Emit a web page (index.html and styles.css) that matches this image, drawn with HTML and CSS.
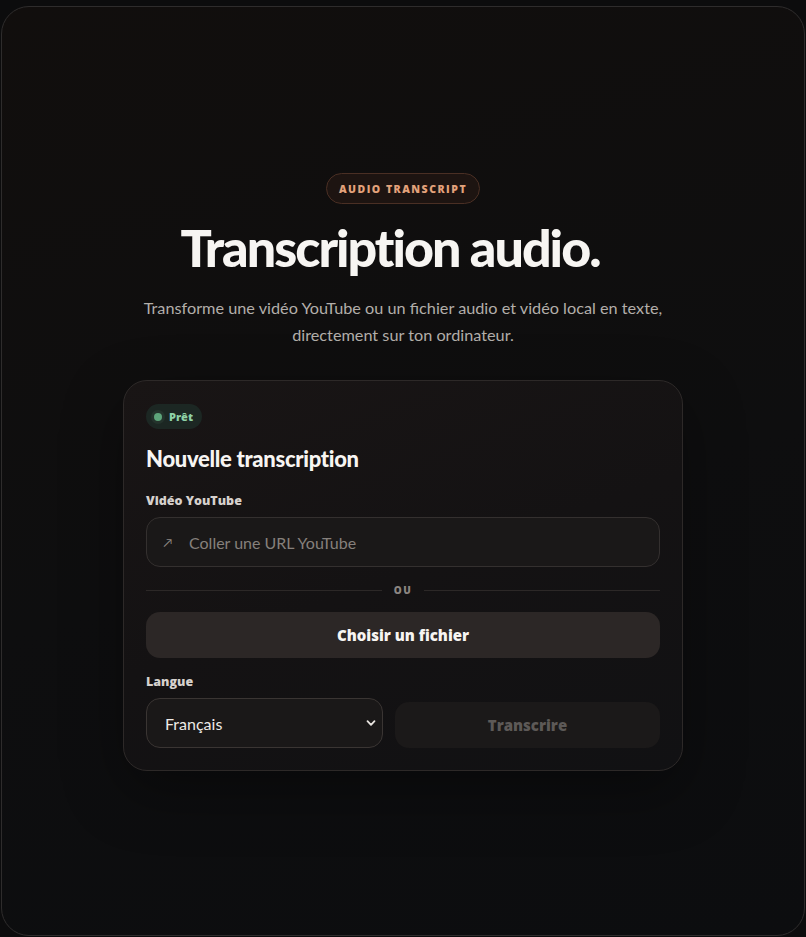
FILE: index.html
```html
<!DOCTYPE html>
<html lang="fr">
<head>
<meta charset="utf-8">
<title>Transcription audio</title>
<link rel="stylesheet" href="styles.css">
</head>
<body>
<main class="frame">
  <div class="content">
    <span class="eyebrow">AUDIO TRANSCRIPT</span>
    <h1 class="title">Transcription audio.</h1>
    <p class="lead">Transforme une vidéo YouTube ou un fichier audio et vidéo local en texte,<br>directement sur ton ordinateur.</p>

    <section class="card">
      <span class="status"><span class="dot"></span>Prêt</span>
      <h2 class="card-title">Nouvelle transcription</h2>

      <label class="label" for="url">Vidéo YouTube</label>
      <div class="input">
        <span class="input-icon">↗</span>
        <input id="url" type="text" placeholder="Coller une URL YouTube">
      </div>

      <div class="divider"><span class="line"></span><span class="or">OU</span><span class="line"></span></div>

      <button class="btn-file" type="button">Choisir un fichier</button>

      <label class="label label-lang" for="lang">Langue</label>
      <div class="row">
        <div class="select">
          <span class="select-value">Français</span>
          <svg class="chevron" viewBox="0 0 12 12" width="12" height="12"><path d="M2.5 4.2 L6 7.8 L9.5 4.2" fill="none" stroke="#e8e4e0" stroke-width="1.8" stroke-linecap="round" stroke-linejoin="round"/></svg>
        </div>
        <button class="btn-go" type="button">Transcrire</button>
      </div>
    </section>
  </div>
</main>
</body>
</html>
```
FILE: styles.css
```css
* { box-sizing: border-box; }
html, body { height: 100%; }
body {
  margin: 0;
  padding: 6px 1px 1px 1px;
  background: #0c0c0d;
  font-family: Lato, "Open Sans", sans-serif;
  color: #f4f2f0;
}
.frame {
  height: 930px;
  border: 1px solid #2e2c2c;
  border-radius: 28px;
  background: linear-gradient(165deg, #110e0d 0%, #0e0e0f 55%, #0c0d0f 100%);
  display: flex;
  align-items: center;
  justify-content: center;
}
.content {
  width: 560px;
  display: flex;
  flex-direction: column;
  align-items: center;
  margin-top: 2px;
}
.eyebrow, .status, .label, .or, .btn-file, .btn-go {
  font-family: "Open Sans", Lato, sans-serif;
  font-weight: 800;
}
.eyebrow {
  height: 31px;
  padding: 0 12px;
  display: inline-flex;
  align-items: center;
  border: 1px solid #4a2f24;
  border-radius: 999px;
  background: #1d1411;
  color: #e3a27b;
  font-size: 10.5px;
  letter-spacing: 1.5px;
}
.title {
  margin: 13px 26px 0 0;
  font-size: 52px;
  font-weight: 900;
  letter-spacing: -2px;
  line-height: 60px;
  color: #f7f5f2;
}
.lead {
  margin: 17px -60px 0;
  text-align: center;
  font-size: 16.25px;
  line-height: 27px;
  color: #b3aeaa;
  white-space: nowrap;
}
.card {
  width: 560px;
  margin-top: 32px;
  padding: 23px 22px 22px 22px;
  border: 1px solid #2d2928;
  border-radius: 24px;
  background: linear-gradient(160deg, #191515 0%, #141213 50%, #111113 100%);
  box-shadow: 0 20px 60px rgba(0,0,0,0.35);
  display: flex;
  flex-direction: column;
  align-items: stretch;
}
.status {
  align-self: flex-start;
  height: 25px;
  padding: 0 9px 0 8px;
  display: inline-flex;
  align-items: center;
  gap: 7px;
  border-radius: 999px;
  background: #1c2723;
  color: #8fd1a6;
  font-size: 11px;
}
.dot {
  width: 8px; height: 8px;
  border-radius: 50%;
  background: #5da47a;
  box-shadow: 0 0 0 3px #24332c;
}
.card-title {
  margin: 16px 0 0;
  font-size: 22px;
  font-weight: 900;
  letter-spacing: -0.3px;
  line-height: 28px;
  color: #f7f5f2;
}
.label {
  margin-top: 19px;
  font-size: 12.5px;
  color: #d6d1cd;
  line-height: 18px;
}
.input {
  margin-top: 7px;
  height: 50px;
  border: 1px solid #34302f;
  border-radius: 14px;
  background: #1a1818;
  display: flex;
  align-items: center;
  padding: 0 18px 0 14px;
  gap: 12px;
}
.input-icon {
  color: #8d8783;
  font-size: 12px;
  width: 14px;
  text-align: center;
}
.input input {
  flex: 1;
  border: 0;
  outline: 0;
  background: transparent;
  font-family: inherit;
  font-size: 16px;
  color: #e8e4e0;
}
.input input::placeholder { color: #86807c; }
.divider {
  margin-top: 17px;
  height: 12px;
  display: flex;
  align-items: center;
  gap: 12px;
}
.line { flex: 1; height: 1px; background: #2c2827; }
.or {
  font-size: 10px;
  letter-spacing: 1.5px;
  color: #8b8581;
}
.btn-file {
  margin-top: 16px;
  height: 46px;
  border: 0;
  border-radius: 14px;
  background: #2c2726;
  color: #f7f5f2;
  font-size: 15px;
}
.label-lang { margin-top: 15px; }
.row {
  margin-top: 7px;
  display: flex;
  align-items: flex-end;
  gap: 12px;
}
.select {
  width: 237px;
  height: 50px;
  border: 1px solid #3a3533;
  border-radius: 14px;
  background: #1a1818;
  display: flex;
  align-items: center;
  justify-content: space-between;
  padding: 0 5px 0 18px;
}
.select-value { font-size: 16px; color: #eeeae6; }
.chevron { display: block; }
.btn-go {
  flex: 1;
  height: 46px;
  border: 0;
  border-radius: 14px;
  background: #1b1919;
  color: #5d5957;
  font-size: 15px;
}
```
